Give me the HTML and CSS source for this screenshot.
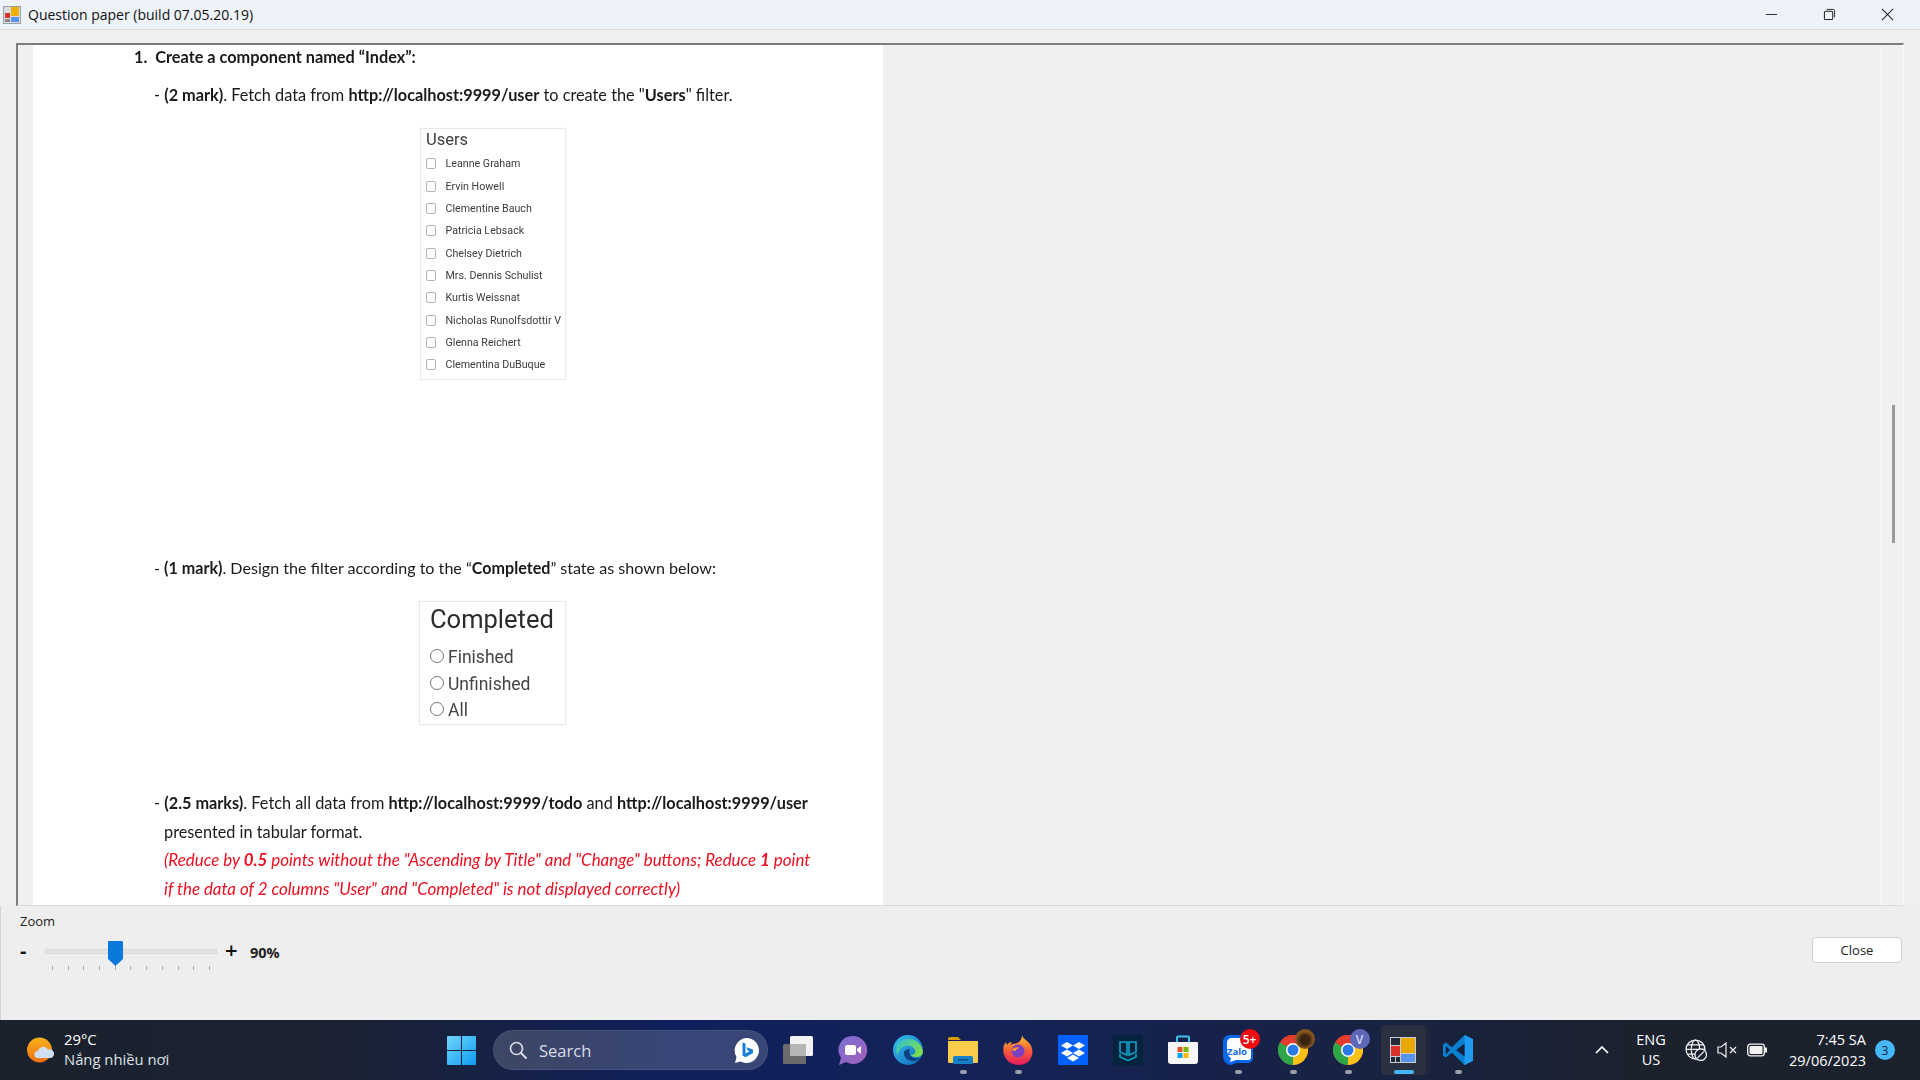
FILE: index.html
```html
<!DOCTYPE html>
<html lang="en">
<head>
<meta charset="utf-8">
<title>Question paper (build 07.05.20.19)</title>
<link rel="stylesheet" href="styles.css">
</head>
<body>
<div class="app">

    <!-- title bar -->
    <div class="titlebar">
        <svg class="appicon" viewBox="0 0 18 18"><rect x="0.5" y="0.5" width="17" height="17" fill="#d9dde3" stroke="#9aa0a8"/><rect x="2" y="7" width="5" height="5" fill="#d8322a"/><rect x="2" y="13" width="5" height="3" fill="#888"/><rect x="8" y="1" width="8" height="9" fill="#f0b000"/><rect x="8" y="11" width="8" height="5" fill="#5a94e8"/></svg>
        <span class="titletext">Question paper (build 07.05.20.19)</span>
        <div class="winbtns">
            <svg viewBox="0 0 14 14"><path d="M1 7h12" stroke="#222" fill="none"/></svg>
            <svg viewBox="0 0 14 14"><rect x="1.5" y="3.5" width="9" height="9" rx="1.5" stroke="#222" stroke-width="1.1" fill="none"/><path d="M4 1.5h7a1.5 1.5 0 0 1 1.5 1.5v7" stroke="#222" fill="none"/></svg>
            <svg viewBox="0 0 14 14"><path d="M1 1l12 12M13 1L1 13" stroke="#222" stroke-width="1.1" fill="none"/></svg>
        </div>
    </div>

    <!-- document viewer -->
    <div class="viewer">
        <div class="canvas">
            <div class="page">
                <p class="heading"><b>1.&nbsp; Create a component named “Index”:</b></p>
                <p class="mark first">- <b>(2 mark)</b>. Fetch data from <b>http://localhost:9999/user</b> to create the "<b>Users</b>" filter.</p>

                <div class="filter users">
                    <div class="usershead">Users</div>
                    <label class="useritem"><span class="check"></span>Leanne Graham</label>
                    <label class="useritem"><span class="check"></span>Ervin Howell</label>
                    <label class="useritem"><span class="check"></span>Clementine Bauch</label>
                    <label class="useritem"><span class="check"></span>Patricia Lebsack</label>
                    <label class="useritem"><span class="check"></span>Chelsey Dietrich</label>
                    <label class="useritem"><span class="check"></span>Mrs. Dennis Schulist</label>
                    <label class="useritem"><span class="check"></span>Kurtis Weissnat</label>
                    <label class="useritem"><span class="check"></span>Nicholas Runolfsdottir V</label>
                    <label class="useritem"><span class="check"></span>Glenna Reichert</label>
                    <label class="useritem"><span class="check"></span>Clementina DuBuque</label>
                </div>

                <p class="mark second">- <b>(1 mark)</b>. Design the filter according to the “<b>Completed</b>” state as shown below:</p>

                <div class="filter completed">
                    <div class="completedhead">Completed</div>
                    <label class="radioitem"><span class="radio"></span>Finished</label>
                    <label class="radioitem"><span class="radio"></span>Unfinished</label>
                    <label class="radioitem"><span class="radio"></span>All</label>
                </div>

                <p class="mark third">- <b>(2.5 marks)</b>. Fetch all data from <b>http://localhost:9999/todo</b> and <b>http://localhost:9999/user</b><br>
                presented in tabular format.<br>
                <span class="red">(Reduce by <b>0.5</b> points without the "Ascending by Title" and "Change" buttons; Reduce <b>1</b> point<br>
                if the data of 2 columns "User" and "Completed" is not displayed correctly)</span></p>
            </div>
        </div>
        <div class="vscroll"><div class="vthumb"></div></div>
    </div>

    <!-- zoom + close -->
    <div class="footer">
        <div class="zoombox">
            <div class="zoomlabel">Zoom</div>
            <div class="zoomrow">
                <span class="minus">-</span>
                <div class="slider">
                    <div class="track"></div>
                    <svg class="thumb" viewBox="0 0 15 25"><path d="M0 1a1 1 0 0 1 1-1h13a1 1 0 0 1 1 1v17l-7.500 7L0 18z" fill="#0a78dc"/></svg>
                    <div class="ticks"><i></i><i></i><i></i><i></i><i></i><i></i><i></i><i></i><i></i><i></i><i></i></div>
                </div>
                <span class="plus">+</span>
                <span class="percent">90%</span>
            </div>
        </div>
        <button class="closebtn">Close</button>
    </div>

    <!-- windows taskbar -->
    <div class="taskbar">
        <div class="weather">
            <svg class="weathericon" viewBox="0 0 28 26"><defs><linearGradient id="sun" x1="0" y1="0" x2="0" y2="1"><stop offset="0" stop-color="#f7b21c"/><stop offset="1" stop-color="#f0700f"/></linearGradient></defs><circle cx="12.500" cy="13" r="12.500" fill="url(#sun)"/><path d="M11 21a3.500 3.500 0 0 1 0-7 5.500 5.500 0 0 1 10-1.500 4.300 4.300 0 0 1 3 8.500z" fill="#cfe0f5"/></svg>
            <div class="weathertext">
                <div>29°C</div>
                <div class="weatherdesc">Nắng nhiều nơi</div>
            </div>
        </div>

        <div class="slot start">
            <svg class="ico" viewBox="0 0 29 29"><defs><linearGradient id="win" x1="0" y1="0" x2="1" y2="1"><stop offset="0" stop-color="#6fd6fb"/><stop offset="1" stop-color="#0f9bf0"/></linearGradient></defs><path d="M0 1a1 1 0 0 1 1-1h13v14H0zM15 0h13a1 1 0 0 1 1 1v13H15zM0 15h14v14H1a1 1 0 0 1-1-1zM15 15h14v13a1 1 0 0 1-1 1H15z" fill="url(#win)"/></svg>
        </div>

        <div class="searchbox">
            <svg class="searchicon" viewBox="0 0 18 18"><circle cx="7.500" cy="7.500" r="6" stroke="#d8dbe6" stroke-width="1.700" fill="none"/><path d="M12 12l5 5" stroke="#d8dbe6" stroke-width="1.900" stroke-linecap="round"/></svg>
            <span class="searchtext">Search</span>
            <svg class="bing" viewBox="0 0 25 25"><path d="M12.500 0a12.500 12.500 0 1 1-6 23.500L1 25l1.500-6A12.500 12.500 0 0 1 12.500 0z" fill="#fff"/><path d="M8.500 4.500l3 1v10l4-2.300-2-1-1-3 6.500 2.400v3.400l-7.500 4.300-3-1.700z" fill="#1680d8"/></svg>
        </div>

        <div class="dock">
            <div class="slot">
                <svg class="ico" viewBox="0 0 30 28"><rect x="7" y="0" width="23" height="20" rx="1.500" fill="#f2f2f2"/><rect x="0" y="8" width="23" height="20" rx="1.500" fill="#6b6b6b"/><rect x="7" y="8" width="16" height="12" fill="#b5b5b5"/></svg>
            </div>
            <div class="slot">
                <svg class="ico" viewBox="0 0 30 30"><defs><linearGradient id="meet" x1="0" y1="0" x2="1" y2="1"><stop offset="0" stop-color="#7b6fd6"/><stop offset="1" stop-color="#a25fb8"/></linearGradient></defs><path d="M15 1a14 14 0 1 1-7 26L1 30l2-7A14 14 0 0 1 15 1z" fill="url(#meet)"/><rect x="7" y="10" width="11" height="10" rx="2" fill="#fff"/><path d="M19 14l4-3v8l-4-3z" fill="#fff"/></svg>
            </div>
            <div class="slot">
                <svg class="ico" viewBox="0 0 30 30"><defs><linearGradient id="edge1" x1="0" y1="0" x2="1" y2="1"><stop offset="0" stop-color="#35c1f1"/><stop offset="1" stop-color="#1066b8"/></linearGradient><linearGradient id="edge2" x1="0" y1="0" x2="1" y2="0.600"><stop offset="0" stop-color="#2cc0d8"/><stop offset="1" stop-color="#7fdc4a"/></linearGradient></defs><circle cx="15" cy="15" r="15" fill="url(#edge1)"/><path d="M6 7A15 15 0 0 1 30 16c0 4-3 6-7 6-3 0-5-1-5-2 3 0 5-2 4-5-1-3-5-5-9-4C8 12 5 16 5 20 2 16 3 10 6 7z" fill="url(#edge2)"/><path d="M11 17c-1 5 4 9 9 9 3 0 5-1 7-3-4 1-8 0-10-3-1-2-1-4 0-6-3 0-5 1-6 3z" fill="#0b3f80"/></svg>
            </div>
            <div class="slot">
                <svg class="ico" viewBox="0 0 30 28"><path d="M0 3a2 2 0 0 1 2-2h8l3 3h-13z" fill="#d99a07"/><path d="M0 5h30v21a1 1 0 0 1-1 1H1a1 1 0 0 1-1-1z" fill="#fbcb4b"/><rect x="5" y="20" width="20" height="8" rx="1.500" fill="#1681c9"/><rect x="10" y="23" width="10" height="1.500" fill="#0a4f80"/></svg>
                <span class="dot"></span>
            </div>
            <div class="slot">
                <svg class="ico" viewBox="0 0 30 30"><defs><linearGradient id="fox" x1="0.500" y1="0" x2="0.500" y2="1"><stop offset="0" stop-color="#fdc52a"/><stop offset="0.500" stop-color="#f7613a"/><stop offset="1" stop-color="#e3195f"/></linearGradient></defs><path d="M19 0c1 4 5 5 8 9 4 6 3 13-2 18-5 4-13 4-19 0C1 23-1 16 1 10l2-3 1 3c1-2 3-3 5-3l-2 3c3-2 7-1 9-3 2-2 3-4 3-7z" fill="url(#fox)"/><circle cx="15" cy="16" r="6.500" fill="#7d3fc4"/><path d="M8 15c2-2 6-4 9-2-3 0-4 2-4 3z" fill="#ff9a1f"/></svg>
                <span class="dot"></span>
            </div>
            <div class="slot">
                <svg class="ico" viewBox="0 0 30 30"><rect width="30" height="30" fill="#0061fe"/><path d="M9 7l6 3.500-6 3.500-6-3.500zM21 7l6 3.500-6 3.500-6-3.500zM9 14.500l6 3.500-6 3.500-6-3.500zM21 14.500l6 3.500-6 3.500-6-3.500zM15 19.500l6 3.500-6 3.500-6-3.500z" fill="#fff"/></svg>
            </div>
            <div class="slot">
                <svg class="ico" viewBox="0 0 30 30"><rect width="30" height="30" fill="#04243d"/><path d="M7 7h7v13l-7-3zM23 7h-7v13l7-3zM7 19v3l8 3.500 8-3.500v-3" stroke="#0aa2c8" stroke-width="1.600" fill="none"/></svg>
            </div>
            <div class="slot">
                <svg class="ico" viewBox="0 0 30 30"><path d="M9 7V2.500A1 1 0 0 1 10 1.500h10a1 1 0 0 1 1 1V7" stroke="#3cc0ec" stroke-width="2" fill="none"/><path d="M1 7h28a1 1 0 0 1 1 1v18a3 3 0 0 1-3 3H3a3 3 0 0 1-3-3V8a1 1 0 0 1 1-1z" fill="#f6f6f6"/><rect x="9.500" y="12" width="5" height="5" fill="#e8502a"/><rect x="15.500" y="12" width="5" height="5" fill="#7ab800"/><rect x="9.500" y="18" width="5" height="5" fill="#00a4ef"/><rect x="15.500" y="18" width="5" height="5" fill="#ffb900"/></svg>
            </div>
            <div class="slot">
                <svg class="ico" viewBox="0 0 30 30"><path d="M7 0h18a5 5 0 0 1 5 5v18a5 5 0 0 1-5 5H13l-5 2c-3 0-8-3-8-9V7c0-4 3-7 7-7z" fill="#0a68e8"/><path d="M9 3h16a3 3 0 0 1 3 3v16a3 3 0 0 1-3 3H13l-6 2 1-4c-2-1-4-4-4-8V8c0-3 2-5 5-5z" fill="#fff"/><text x="14" y="20" class="zalotext">Zalo</text></svg>
                <span class="badge redbadge">5+</span>
                <span class="dot"></span>
            </div>
            <div class="slot">
                <svg class="ico" viewBox="0 0 30 30"><use href="#chrome"/></svg>
                <span class="badge avatar"></span>
                <span class="dot"></span>
            </div>
            <div class="slot">
                <svg class="ico" viewBox="0 0 30 30">
                    <g id="chrome">
                        <circle cx="15" cy="15" r="15" fill="#e33b2e"/>
                        <path d="M15 15L28 7.500A15 15 0 0 1 15 30z" fill="#fbc116"/>
                        <path d="M15 15L15 30A15 15 0 0 1 2 7.500z" fill="#2fa54a"/>
                        <path d="M2 7.500A15 15 0 0 1 28 7.500H15z" fill="#e33b2e"/>
                        <circle cx="15" cy="15" r="7" fill="#fff"/>
                        <circle cx="15" cy="15" r="5.500" fill="#2a7be8"/>
                    </g>
                </svg>
                <span class="badge vbadge">V</span>
                <span class="dot"></span>
            </div>
            <div class="slot active">
                <svg class="ico smallico" viewBox="0 0 26 26"><rect width="26" height="26" fill="#c8ccd2"/><rect x="1" y="9" width="9" height="10" fill="#d8322a"/><rect x="1" y="20" width="4" height="5" fill="#222838"/><rect x="6" y="20" width="4" height="5" fill="#222838"/><rect x="1" y="1" width="9" height="7" fill="#222838"/><rect x="11" y="1" width="14" height="15" fill="#e8a800"/><rect x="11" y="17" width="14" height="8" fill="#5a94e8"/></svg>
                <span class="activebar"></span>
            </div>
            <div class="slot">
                <svg class="ico" viewBox="0 0 32 32"><path d="M23 0l9 4.500v23L23 32 9.500 19 3 24l-3-2v-12l3-2 6.500 5z" fill="#0a7fd0"/><path d="M23 0l9 4.500v23L23 32z" fill="#1f9cf0"/><path d="M23 9l-9 7 9 7z" fill="#12213f"/><path d="M3 11.500v9l4.500-4.500z" fill="#12213f"/></svg>
                <span class="dot"></span>
            </div>
        </div>

        <div class="tray">
            <svg class="chevron" viewBox="0 0 14 8"><path d="M1 7l6-6 6 6" stroke="#fff" stroke-width="1.700" fill="none"/></svg>
            <div class="lang"><div>ENG</div><div>US</div></div>
            <div class="trayicons">
                <svg viewBox="0 0 21 21"><g stroke="#f2f2f2" stroke-width="1.200" fill="none"><circle cx="10" cy="10" r="9"/><ellipse cx="10" cy="10" rx="4" ry="9"/><path d="M1 10h18M2.500 5.500h15M2.500 14.500h15"/></g><circle cx="15" cy="15" r="5.500" fill="#1a2130" stroke="#f2f2f2" stroke-width="1.200"/><path d="M12 18l6-6" stroke="#f2f2f2" stroke-width="1.200"/></svg>
                <svg viewBox="0 0 20 16"><path d="M1 5h3l5-4v14l-5-4H1z" stroke="#f2f2f2" stroke-width="1.200" fill="none"/><path d="M13 5l6 6M19 5l-6 6" stroke="#f2f2f2" stroke-width="1.200"/></svg>
                <svg viewBox="0 0 20 13"><rect x="0.700" y="0.700" width="16.600" height="11.600" rx="2.500" stroke="#f2f2f2" stroke-width="1.300" fill="none"/><rect x="2.500" y="2.500" width="13" height="8" rx="1" fill="#f2f2f2"/><rect x="18" y="4" width="2" height="5" fill="#f2f2f2"/></svg>
            </div>
            <div class="clock"><div>7:45 SA</div><div>29/06/2023</div></div>
            <span class="notif">3</span>
        </div>
    </div>
</div>
</body>
</html>
```

FILE: styles.css
```css
html, body {
    margin: 0;
    padding: 0;
    height: 100%;
    overflow: hidden;
}
body {
    background-color: #f0f0f0;
    font-family: "Open Sans", sans-serif;
    color: #111;
}
.app {
    display: flex;
    flex-direction: column;
    height: 1080px;
}

/* title bar */
.titlebar {
    display: flex;
    align-items: center;
    flex: 0 0 29px;
    background-color: #eef2f9;
    border-bottom: 1px solid #d9d9d9;
    padding-left: 3px;
}
.appicon {
    width: 18px;
    height: 18px;
    margin-right: 7px;
}
.titletext {
    font-size: 14px;
    color: #111;
}
.winbtns {
    display: flex;
    margin-left: auto;
    gap: 45px;
    padding-right: 26px;
}
.winbtns svg {
    width: 13px;
    height: 13px;
}

/* viewer */
.viewer {
    display: flex;
    height: 860px;
    margin: 13px 16px 0 16px;
    border-top: 2px solid #7d7d7d;
    border-left: 2px solid #7d7d7d;
    border-right: 1px solid #fbfbfb;
    border-bottom: 1px solid #dcdcdc;
}
.canvas {
    flex: 1;
    padding-left: 15px;
    overflow: hidden;
    border-right: 1px solid #fbfbfb;
}
.vscroll {
    flex: 0 0 21px;
    padding-left: 10px;
    box-sizing: border-box;
}
.vthumb {
    width: 3px;
    height: 138px;
    margin-top: 360px;
    background-color: #999;
}
.page {
    width: 850px;
    height: 100%;
    padding-top: 1px;
    box-sizing: border-box;
    background-color: #fff;
    overflow: hidden;
    font-family: Lato, sans-serif;
    font-size: 16.3px;
    color: #1a1a1a;
    filter: blur(0.45px);
}
.page p {
    margin: 0;
}
.heading {
    padding-left: 101px;
    line-height: 22px;
}
.mark {
    margin-left: 121px !important;
    padding-left: 10px;
    text-indent: -10px;
    line-height: 28.5px;
    white-space: nowrap;
}
.mark.first {
    margin-top: 13px !important;
}
.mark.second {
    margin-top: 174px !important;
    font-size: 16.1px;
}
.mark.third {
    margin-top: 64px !important;
}
.red {
    color: #ee0f1f;
    font-style: italic;
    font-size: 16.9px;
}

/* filter boxes */
.filter {
    margin-left: 387px;
    margin-top: 18px;
    width: 146px;
    box-sizing: border-box;
    border: 1px solid #e9e9e9;
    font-family: Roboto, sans-serif;
    color: #3c3c3c;
    box-shadow: 0 0 1px #eee;
}
.users {
    height: 252px;
    padding: 0 0 0 5px;
}
.usershead {
    font-size: 16.5px;
    line-height: 22px;
    height: 24px;
}
.useritem {
    display: flex;
    align-items: center;
    height: 22.35px;
    font-size: 10.7px;
    white-space: nowrap;
}
.check {
    width: 8px;
    height: 9px;
    border: 1px solid #b4b4b4;
    border-radius: 2px;
    margin-right: 9.500px;
}
.completed {
    height: 124px;
    padding: 0 0 0 10px;
    margin-left: 386px;
    margin-top: 19px;
    width: 147px;
}
.completedhead {
    font-size: 25.5px;
    line-height: 32px;
    height: 41px;
    padding-top: 1px;
    color: #2c2c2c;
}
.radioitem {
    display: flex;
    align-items: center;
    height: 26.5px;
    font-size: 17.5px;
    color: #444;
}
.radio {
    width: 12px;
    height: 12px;
    border: 1px solid #777;
    border-radius: 50%;
    margin-right: 4px;
    margin-top: -2px;
}

/* zoom and close */
.footer {
    display: flex;
    justify-content: space-between;
    flex: 1;
    border-left: 1px solid #d4d4d4;
    padding: 0 18px 0 19px;
    background-color: #eee;
}
.zoomlabel {
    font-size: 13px;
    line-height: 18px;
    margin-top: 6px;
    color: #222;
}
.zoomrow {
    display: flex;
    align-items: flex-start;
    margin-top: 9px;
}
.minus {
    width: 25px;
    font-weight: 700;
    font-size: 20px;
    line-height: 24px;
}
.slider {
    position: relative;
    width: 172px;
    height: 34px;
}
.track {
    height: 5px;
    margin-top: 10px;
    background-color: #e2e4e4;
    border: 1px solid #d8dada;
    box-sizing: border-box;
}
.thumb {
    position: absolute;
    left: 63px;
    top: 2px;
    width: 15px;
    height: 25px;
}
.ticks {
    display: flex;
    justify-content: space-between;
    padding: 12px 7px 0;
}
.ticks i {
    width: 1px;
    height: 4px;
    background-color: #aaa;
}
.plus {
    margin-left: 8px;
    width: 25px;
    font-size: 22px;
    font-weight: 600;
    line-height: 20px;
}
.percent {
    font-size: 14.5px;
    font-weight: 700;
    line-height: 24px;
    margin-top: 2px;
    color: #222;
}
.closebtn {
    width: 90px;
    height: 26px;
    margin-top: 31px;
    background-color: #fff;
    border: 1px solid #d0d0d0;
    border-radius: 4px;
    font-family: "Open Sans", sans-serif;
    font-size: 13px;
    color: #222;
}

/* taskbar */
.taskbar {
    display: flex;
    align-items: center;
    flex: 0 0 60px;
    color: #fff;
    background: linear-gradient(90deg, #1b212c 0%, #1a2233 18%, #10205c 35%, #142256 52%, #182242 72%, #1b222e 85%, #1b212c 100%);
}
.weather {
    display: flex;
    align-items: center;
    width: 407px;
    padding-left: 27px;
}
.weathericon {
    width: 28px;
    height: 26px;
    margin-right: 9px;
}
.weathertext {
    font-size: 14.8px;
    line-height: 20px;
    margin-top: -2px;
}
.weatherdesc {
    color: #dfe3e8;
}
.slot {
    position: relative;
    display: flex;
    align-items: center;
    justify-content: center;
    width: 55px;
    height: 60px;
}
.ico {
    width: 30px;
    height: 30px;
}
.smallico {
    width: 26px;
    height: 26px;
}
.start .ico {
    width: 29px;
    height: 29px;
}
.searchbox {
    display: flex;
    align-items: center;
    width: 275px;
    height: 40px;
    margin-left: 4px;
    box-sizing: border-box;
    padding: 0 8px 0 15px;
    border-radius: 20px;
    background-color: rgba(255, 255, 255, 0.17);
    border: 1px solid rgba(255, 255, 255, 0.07);
}
.searchicon {
    width: 18px;
    height: 18px;
    margin-right: 12px;
}
.searchtext {
    font-size: 16.5px;
    color: #dadce6;
}
.bing {
    width: 25px;
    height: 25px;
    margin-left: auto;
}
.dock {
    display: flex;
    margin-left: 2.5px;
}
.dot {
    position: absolute;
    left: 24px;
    bottom: 6px;
    width: 7px;
    height: 4px;
    border-radius: 2px;
    background-color: #9a9ea8;
}
.badge {
    position: absolute;
    display: flex;
    align-items: center;
    justify-content: center;
    top: 9px;
    left: 29px;
    width: 20px;
    height: 20px;
    border-radius: 50%;
}
.redbadge {
    background-color: #ee0b12;
    font-size: 12px;
    font-weight: 600;
}
.avatar {
    background: radial-gradient(circle at 50% 55%, #3a2410 0 30%, #8a5a1e 60%, #5e3c12 100%);
}
.vbadge {
    background-color: #5e68b8;
    font-size: 12px;
    font-weight: 600;
    color: #d8dcf0;
}
.zalotext {
    font-family: "Open Sans", sans-serif;
    font-size: 9.5px;
    font-weight: 700;
    fill: #0a68e8;
    text-anchor: middle;
}
.active {
    border-radius: 5px;
    height: 50px;
    width: 45px;
    margin: 5px 5px;
    background-color: #2a3040;
    box-shadow: 5px 0 0 -1px #20273a;
}
.activebar {
    position: absolute;
    left: 13px;
    bottom: 1px;
    width: 20px;
    height: 4px;
    border-radius: 2px;
    background-color: #47b8f7;
}
.tray {
    display: flex;
    align-items: center;
    margin-left: auto;
    padding-right: 25px;
}
.chevron {
    width: 14px;
    height: 8px;
    margin-right: 24px;
}
.lang {
    width: 36px;
    margin-right: 16px;
    font-size: 14.5px;
    line-height: 20px;
    text-align: center;
}
.trayicons {
    display: flex;
    align-items: center;
    gap: 10px;
    margin-right: 22px;
}
.trayicons svg {
    width: 20px;
    height: 20px;
}
.trayicons svg:first-child {
    width: 22px;
    height: 22px;
}
.clock {
    font-size: 14.5px;
    line-height: 21px;
    text-align: right;
    margin-right: 9px;
}
.notif {
    display: flex;
    align-items: center;
    justify-content: center;
    width: 20px;
    height: 20px;
    border-radius: 50%;
    background-color: #47b8f7;
    color: #10202c;
    font-size: 12px;
}
```
